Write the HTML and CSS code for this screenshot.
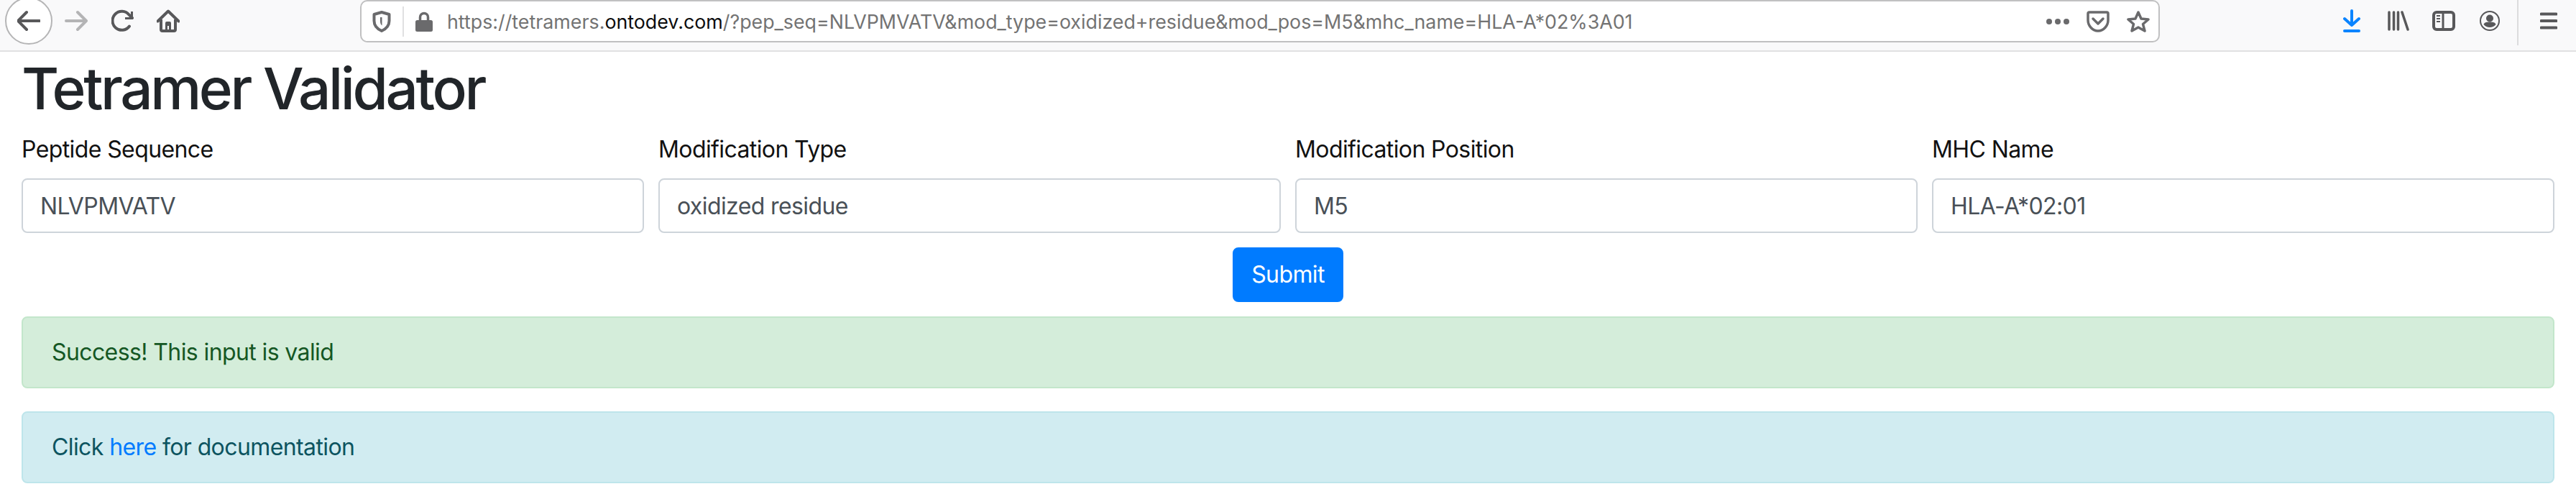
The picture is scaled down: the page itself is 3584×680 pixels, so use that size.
FILE: index.html
```html
<!DOCTYPE html>
<html lang="en">
<head>
<meta charset="utf-8">
<title>Tetramer Validator</title>
<link rel="stylesheet" href="styles.css">
</head>
<body>
<header class="toolbar">
  <nav class="nav">
    <button class="back" aria-label="Back">
      <svg class="icon" viewBox="0 0 32 32"><path d="M1 16h30M13 4 1 16l12 12" fill="none" stroke="#58585a" stroke-width="4" stroke-linecap="round" stroke-linejoin="round"/></svg>
    </button>
    <svg class="icon forward" viewBox="0 0 32 32"><path d="M2 16h28M18 4l12 12-12 12" fill="none" stroke="#b4b4b5" stroke-width="4" stroke-linecap="round" stroke-linejoin="round"/></svg>
    <svg class="icon reload" viewBox="0 0 32 32"><path d="M25 23.500A13 13 0 1 1 24.500 7.500L29 12" fill="none" stroke="#58585a" stroke-width="4" stroke-linecap="round"/><path d="M30 3v11H19v-3h8V3z" fill="#58585a"/></svg>
    <svg class="icon home" viewBox="0 0 32 32"><path d="M1.500 16.500 16 2.500l14.500 14" fill="none" stroke="#58585a" stroke-width="4" stroke-linecap="round" stroke-linejoin="round"/><path d="M6 14v14a2 2 0 0 0 2 2h16a2 2 0 0 0 2-2V14" fill="none" stroke="#58585a" stroke-width="4"/><path d="M12 29V19a2 2 0 0 1 2-2h4a2 2 0 0 1 2 2v10h-3v-6h-2v6z" fill="#58585a"/></svg>
  </nav>
  <div class="urlbar">
    <svg class="icon shield" viewBox="0 0 26 30"><path d="M13 2 2.500 5v9c0 7 5 11.500 10.500 14 5.500-2.500 10.500-7 10.500-14V5z" fill="none" stroke="#6a6a6c" stroke-width="4" stroke-linejoin="round"/><path d="M11 9h2.500v11.500C11.500 19 11 17 11 14z" fill="#6a6a6c"/></svg>
    <span class="urlsep"></span>
    <svg class="icon lock" viewBox="0 0 24 28"><path d="M6.500 13V8a5.500 5.500 0 0 1 11 0v5" fill="none" stroke="#6a6a6c" stroke-width="3.500"/><rect y="12" width="24" height="16" rx="2.500" fill="#6a6a6c"/></svg>
    <span class="url">https://tetramers.<span class="domain">ontodev.com</span>/?pep_seq=NLVPMVATV&amp;mod_type=oxidized+residue&amp;mod_pos=M5&amp;mhc_name=HLA-A*02%3A01</span>
    <svg class="icon dots" viewBox="0 0 32 8"><g fill="#6a6a6c"><circle cx="4" cy="4" r="4"/><circle cx="16" cy="4" r="4"/><circle cx="28" cy="4" r="4"/></g></svg>
    <svg class="icon pocket" viewBox="0 0 32 30"><path d="M4 2h24a2 2 0 0 1 2 2v9c0 8-6.500 15-14 15S2 21 2 13V4a2 2 0 0 1 2-2z" fill="none" stroke="#6a6a6c" stroke-width="3.500"/><path d="M9 11l7 7 7-7" fill="none" stroke="#6a6a6c" stroke-width="3.500" stroke-linecap="round" stroke-linejoin="round"/></svg>
    <svg class="icon star" viewBox="0 0 32 32"><path d="M16 3l4 9 10 1-7.500 6.500L25 29l-9-5-9 5 2.500-9.500L2 13l10-1z" fill="none" stroke="#6a6a6c" stroke-width="3.500" stroke-linejoin="round"/></svg>
  </div>
  <div class="tools">
    <svg class="icon download" viewBox="0 0 24 32"><path d="M12 2v20M2 13l10 9 10-9" fill="none" stroke="#0a84ff" stroke-width="4" stroke-linecap="round" stroke-linejoin="round"/><rect y="28" width="24" height="4" rx="2" fill="#0a84ff"/></svg>
    <svg class="icon library" viewBox="0 0 30 28"><g stroke="#58585a" stroke-width="3.500" stroke-linecap="round" fill="none"><path d="M2 2v24M8.500 2v24M14.500 2v24M20 2l8 24"/></g></svg>
    <svg class="icon sidebar" viewBox="0 0 32 28"><rect x="2" y="2" width="28" height="24" rx="4" fill="none" stroke="#58585a" stroke-width="4"/><path d="M15 2v24" stroke="#58585a" stroke-width="3"/><path d="M6 7h5M6 11h5M6 15h5" stroke="#58585a" stroke-width="2"/></svg>
    <svg class="icon account" viewBox="0 0 28 28"><circle cx="14" cy="14" r="13" fill="none" stroke="#58585a" stroke-width="2"/><circle cx="14" cy="10.500" r="5" fill="#58585a"/><path d="M5.500 19c1-3 4-3.500 8.500-3.500s7.500.5 8.500 3.500c-2 2.500-5 4-8.500 4s-6.500-1.500-8.500-4z" fill="#58585a"/></svg>
    <span class="toolsep"></span>
    <svg class="icon menu" viewBox="0 0 24 24"><path d="M1.500 2.500h21M1.500 12h21M1.500 21.500h21" stroke="#58585a" stroke-width="4" stroke-linecap="round"/></svg>
  </div>
</header>
<main class="page">
  <h1 class="title">Tetramer Validator</h1>
  <form class="form">
    <div class="fields">
      <div class="field">
        <label class="label" for="f1">Peptide Sequence</label>
        <input class="input" id="f1" value="NLVPMVATV">
      </div>
      <div class="field">
        <label class="label" for="f2">Modification Type</label>
        <input class="input" id="f2" value="oxidized residue">
      </div>
      <div class="field">
        <label class="label" for="f3">Modification Position</label>
        <input class="input" id="f3" value="M5">
      </div>
      <div class="field">
        <label class="label" for="f4">MHC Name</label>
        <input class="input" id="f4" value="HLA-A*02:01">
      </div>
    </div>
    <div class="actions"><button class="submit" type="button">Submit</button></div>
  </form>
  <div class="alert success">Success! This input is valid</div>
  <div class="alert info">Click <a class="link" href="#">here</a> for documentation</div>
</main>
</body>
</html>
```

FILE: styles.css
```css
* { box-sizing: border-box; }
html, body { margin: 0; padding: 0; background: #fff; }
body { font-family: Inter, "Liberation Sans", sans-serif; font-size: 32px; line-height: 48px; letter-spacing: -0.6px; color: #212529; }

.toolbar { display: flex; align-items: center; height: 72px; padding-bottom: 12px; background: #f9f9fa; border-bottom: 2px solid #e1e1e2; overflow: hidden; }
.icon { display: block; flex: none; }
.nav { display: flex; align-items: center; width: 501px; flex: none; height: 60px; }
.back { flex: none; width: 66px; height: 66px; margin: 0 0 0 7px; padding: 0; display: flex; align-items: center; justify-content: center; background: #fff; border: 2px solid #b5b5b6; border-radius: 50%; }
.back .icon { width: 32px; height: 32px; }
.forward { width: 32px; height: 32px; margin-left: 17px; }
.reload { width: 32px; height: 32px; margin-left: 33px; }
.home { width: 32px; height: 32px; margin-left: 31px; }

.urlbar { display: flex; align-items: center; flex: none; width: 2504px; height: 59px; margin-top: 1px; padding: 0 12px 0 15px; background: #fff; border: 2px solid #c0c0c1; border-radius: 10px; }
.shield { width: 26px; height: 30px; }
.urlsep { width: 2px; height: 42px; margin: 0 16px 0 16px; background: #e0e0e1; flex: none; }
.lock { width: 24px; height: 28px; }
.url { flex: 1; min-width: 0; margin-left: 20px; font-size: 26.8px; line-height: 36px; letter-spacing: 0; color: #737373; white-space: nowrap; overflow: hidden; }
.domain { color: #0c0c0d; }
.dots { width: 32px; height: 8px; }
.pocket { width: 32px; height: 30px; margin-left: 24px; }
.star { width: 32px; height: 32px; margin-left: 24px; }

.tools { display: flex; align-items: center; flex: 1; height: 60px; padding-left: 255px; }
.download { width: 24px; height: 32px; }
.library { width: 30px; height: 28px; margin-left: 38px; }
.sidebar { width: 32px; height: 28px; margin-left: 32px; }
.account { width: 28px; height: 28px; margin-left: 34px; }
.toolsep { width: 2px; height: 64px; margin: 4px 0 0 24px; background: #dcdcdd; flex: none; }
.menu { width: 24px; height: 24px; margin-left: 30px; }

.page { padding: 3px 30px 0; }
.title { margin: 0 0 13px; font-size: 80px; line-height: 96px; font-weight: 500; letter-spacing: -3.4px; }
.fields { display: grid; grid-template-columns: repeat(4, 1fr); gap: 20px; }
.field { display: flex; flex-direction: column; gap: 16px; }
.label { display: block; color: #111; }
.input { display: block; width: 100%; height: 76px; padding: 12px 24px; font: inherit; letter-spacing: -0.6px; color: #495057; background: #fff; border: 2px solid #ced4da; border-radius: 8px; }
.actions { display: flex; justify-content: center; margin-top: 20px; }
.submit { width: 154px; height: 76px; padding: 0; font: inherit; letter-spacing: -0.6px; color: #fff; background: #007bff; border: 2px solid #007bff; border-radius: 8px; }
.alert { margin-bottom: 32px; padding: 24px 40px; border: 2px solid transparent; border-radius: 8px; }
.success { margin-top: 20px; color: #155724; background: #d4edda; border-color: #c3e6cb; }
.info { color: #0c5460; background: #d1ecf1; border-color: #bee5eb; }
.link { color: #007bff; text-decoration: none; }
```
